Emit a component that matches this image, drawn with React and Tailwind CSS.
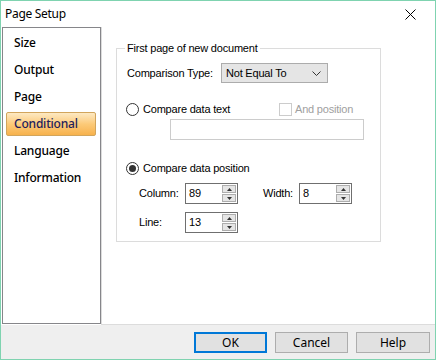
import React from 'react';

const sans = { fontFamily: '"Noto Sans", "Liberation Sans", sans-serif' };

const navItems = ['Size', 'Output', 'Page', 'Conditional', 'Language', 'Information'];

const Radio = ({ checked }) => (
  <span className="w-[13px] h-[13px] rounded-full border border-[#333333] bg-white flex items-center justify-center shrink-0">
    {checked && <span className="w-[7px] h-[7px] rounded-full bg-[#333333]" />}
  </span>
);

const Spin = ({ value }) => (
  <div className="w-[53px] h-[21px] border border-[#6f6f6f] bg-white flex">
    <div className="flex-1 pl-[3px] leading-[19px] text-black">{value}</div>
    <div className="w-[16px] flex flex-col gap-[1px] p-[1px]">
      <div className="flex-1 bg-[#e5e5e5] border border-[#adadad] flex items-center justify-center">
        <svg width="5" height="3" viewBox="0 0 5 3"><path d="M0 3 L2.5 0 L5 3 Z" fill="#333" /></svg>
      </div>
      <div className="flex-1 bg-[#e5e5e5] border border-[#adadad] flex items-center justify-center">
        <svg width="5" height="3" viewBox="0 0 5 3"><path d="M0 0 L2.5 3 L5 0 Z" fill="#333" /></svg>
      </div>
    </div>
  </div>
);

export default function App() {
  return (
    <div className="w-[436px] h-[360px] border border-[#7fd3b0] bg-white flex flex-col overflow-hidden" style={sans}>
      {/* Title bar */}
      <div className="h-[26px] flex items-center justify-between pl-[4px] pr-[19px] shrink-0">
        <span className="text-[12px] text-black tracking-[-0.3px]">Page Setup</span>
        <svg width="11" height="11" viewBox="0 0 11 11">
          <path d="M0.5 0.5 L10.5 10.5 M10.5 0.5 L0.5 10.5" stroke="#000" strokeWidth="1" />
        </svg>
      </div>

      {/* Body */}
      <div className="h-[298px] flex shrink-0">
        <div className="ml-[1px] w-[99px] h-[297px] border border-[#86868a] pt-[1px]">
          {navItems.map((item) => (
            <div key={item} className="h-[27px] flex items-center">
              {item === 'Conditional' ? (
                <div className="ml-[3px] w-[90px] h-[24px] rounded-[2px] border border-[#d2a55c] bg-gradient-to-b from-[#fde9c2] via-[#fcca78] to-[#f7b24c] flex items-center pl-[7px] text-[12px] font-medium tracking-[-0.2px] text-[#1d1d5c]">
                  {item}
                </div>
              ) : (
                <span className="pl-[11px] text-[12px] font-medium tracking-[-0.2px] text-black">{item}</span>
              )}
            </div>
          ))}
        </div>

        <div className="flex-1 border-l border-b border-[#dcdcdc] pt-[21px] pl-[14px]" style={{ fontFamily: '"Liberation Sans", Arial, sans-serif' }}>
          <div className="relative w-[265px] h-[194px] border border-[#dcdcdc] text-[11px] tracking-[-0.2px] text-black">
            <span className="absolute -top-[8px] left-[8px] bg-white px-[2px] leading-[14px]">First page of new document</span>

            <div className="mt-[14px] pl-[10px] flex items-center h-[20px]">
              <span className="w-[94px]">Comparison Type:</span>
              <div className="w-[107px] h-[20px] bg-[#e5e5e5] border border-[#acacac] flex items-center justify-between pl-[4px] pr-[6px]">
                <span>Not Equal To</span>
                <svg width="9" height="5" viewBox="0 0 9 5">
                  <path d="M0.5 0.5 L4.5 4.5 L8.5 0.5" stroke="#333" strokeWidth="1" fill="none" />
                </svg>
              </div>
            </div>

            <div className="mt-[20px] pl-[9px] flex items-center h-[13px]">
              <Radio />
              <span className="ml-[4px] w-[136px]">Compare data text</span>
              <span className="w-[13px] h-[13px] border border-[#cccccc] bg-white shrink-0" />
              <span className="ml-[3px] text-[#a0a0a0]">And position</span>
            </div>

            <div className="mt-[3px] ml-[53px] w-[194px] h-[21px] border border-[#cccccc] bg-white" />

            <div className="mt-[22px] pl-[9px] flex items-center h-[13px]">
              <Radio checked />
              <span className="ml-[4px]">Compare data position</span>
            </div>

            <div className="mt-[8px] pl-[22px] flex items-center">
              <span className="w-[46px]">Column:</span>
              <Spin value="89" />
              <span className="ml-[25px] w-[36px]">Width:</span>
              <Spin value="8" />
            </div>

            <div className="mt-[8px] pl-[22px] flex items-center">
              <span className="w-[46px]">Line:</span>
              <Spin value="13" />
            </div>
          </div>
        </div>
      </div>

      {/* Buttons */}
      <div className="flex-1 bg-[#efefef] flex justify-end items-start gap-[8px] pt-[7px] pr-[5px]">
        <button className="w-[73px] h-[21px] bg-[#e1e1e1] border-2 border-[#0078d7] text-[12px] text-black">OK</button>
        <button className="w-[73px] h-[21px] bg-[#e1e1e1] border border-[#adadad] text-[12px] text-black">Cancel</button>
        <button className="w-[74px] h-[21px] bg-[#e1e1e1] border border-[#adadad] text-[12px] text-black">Help</button>
      </div>
    </div>
  );
}
